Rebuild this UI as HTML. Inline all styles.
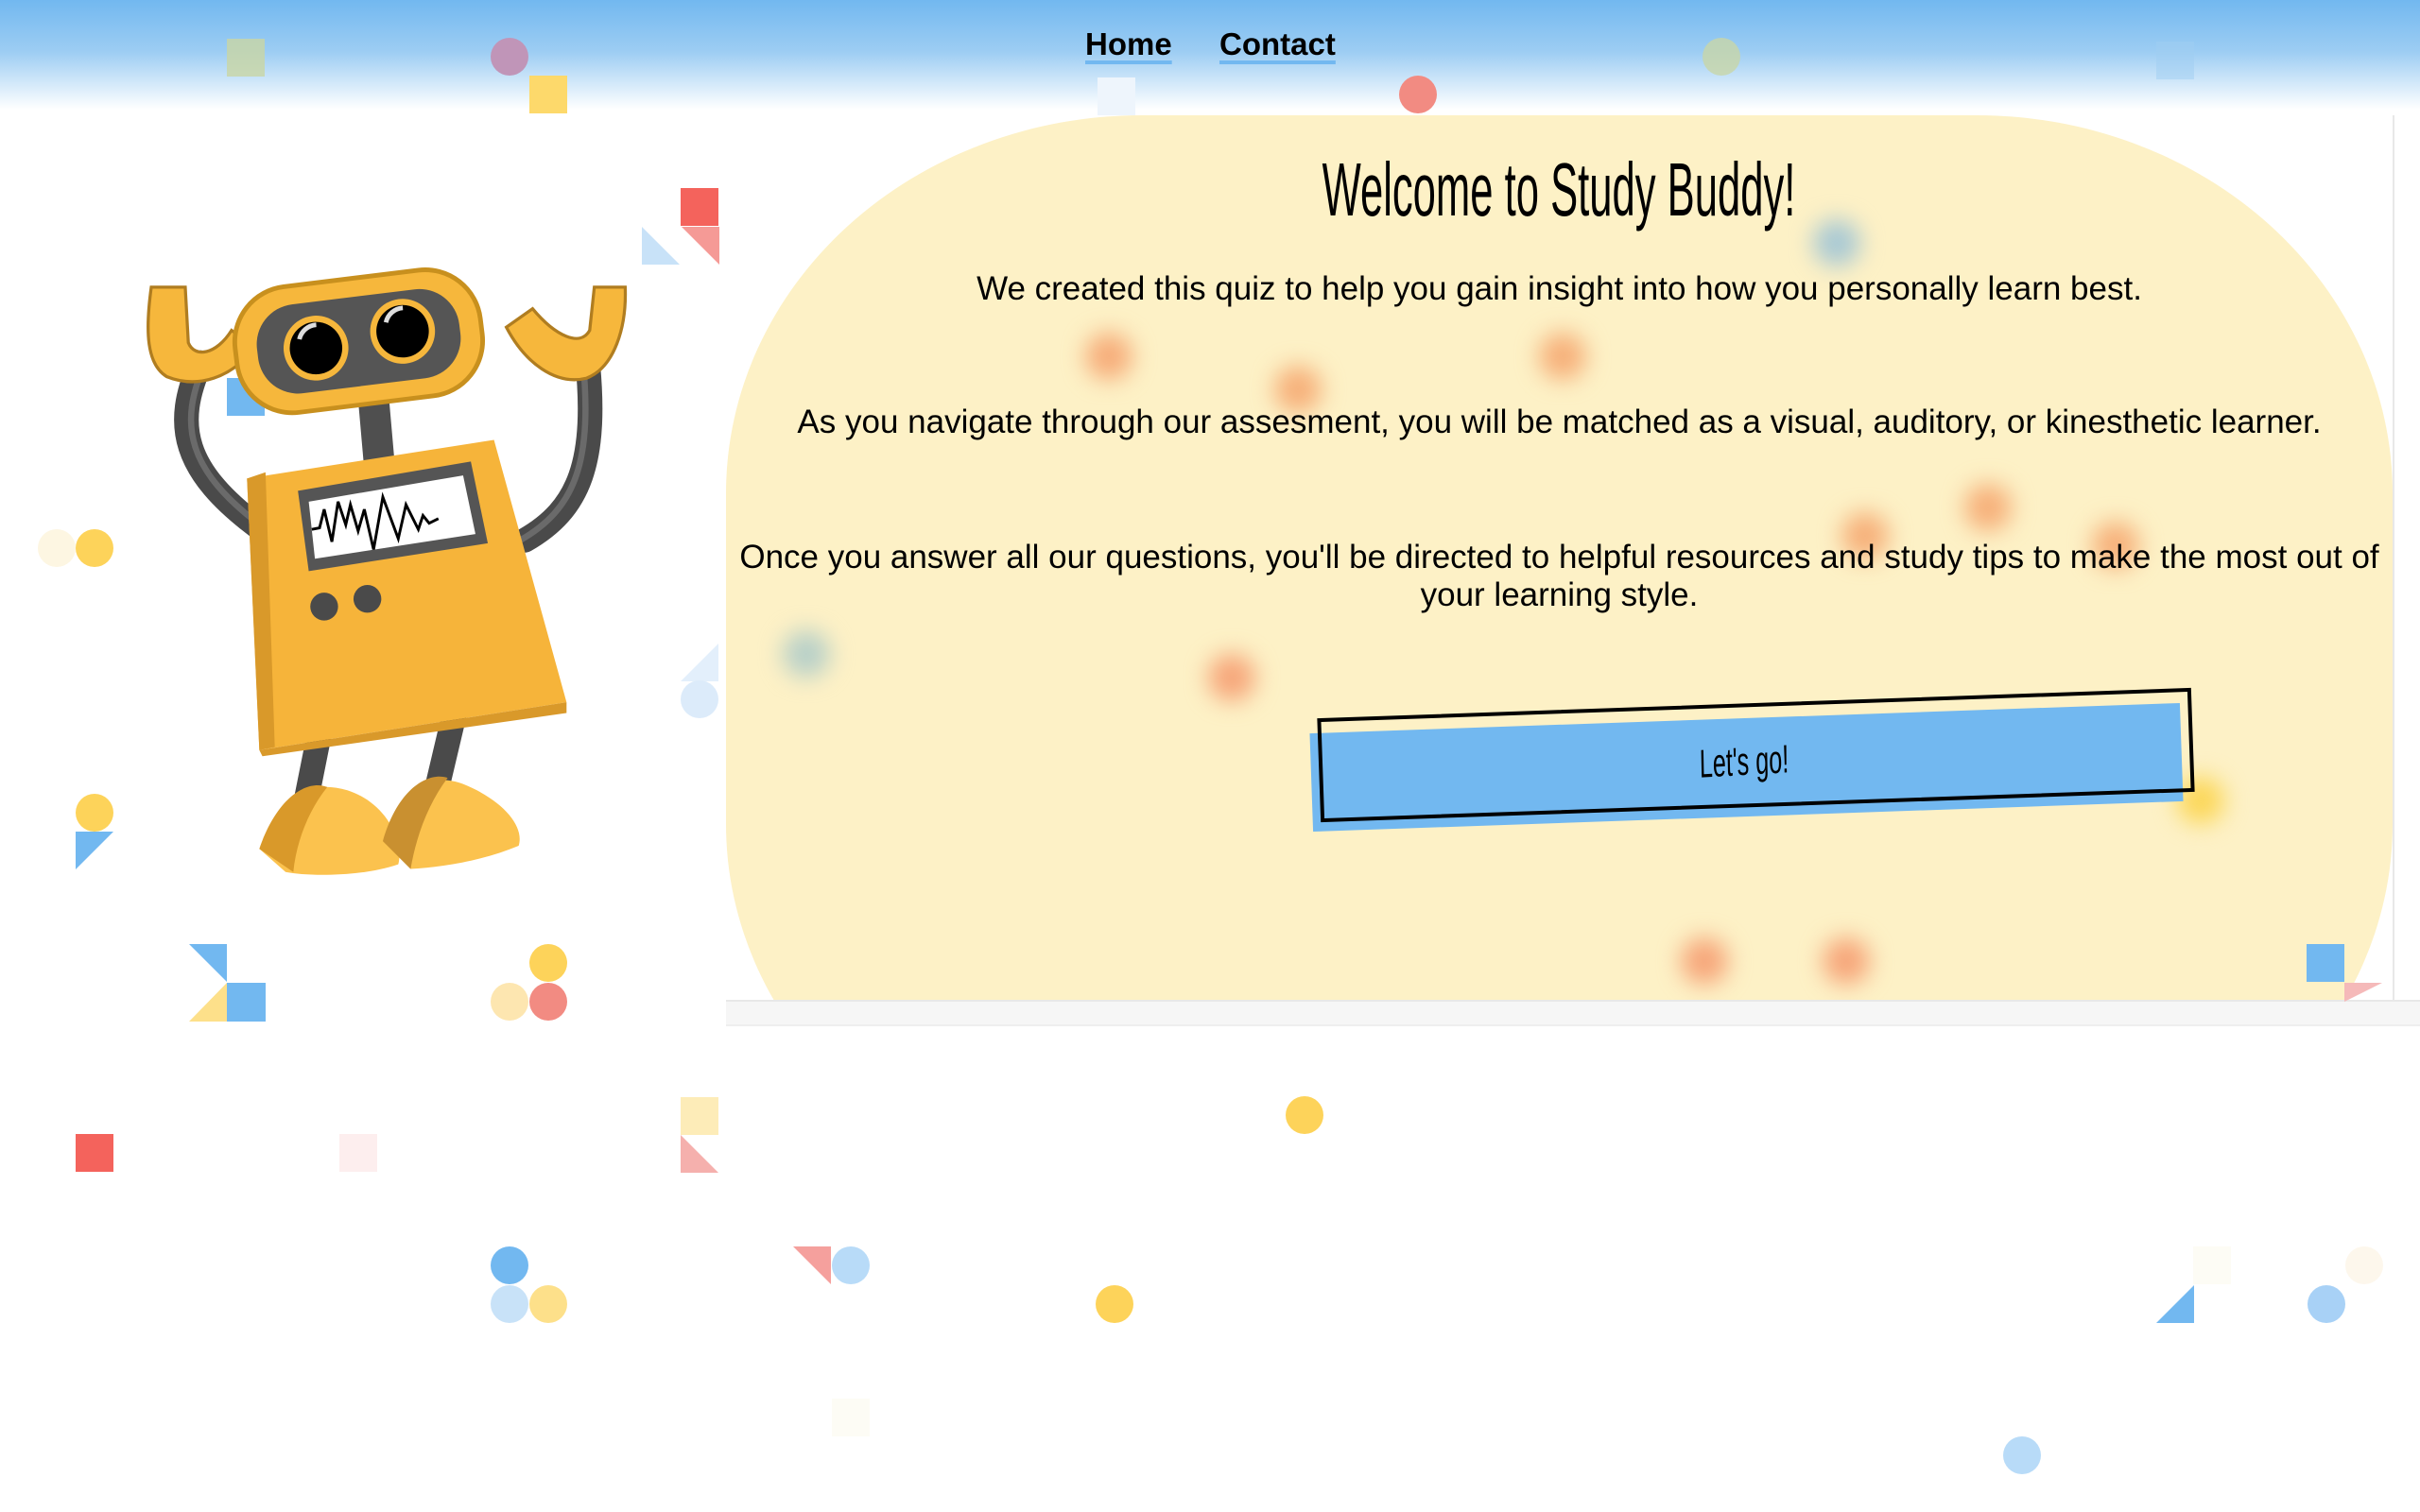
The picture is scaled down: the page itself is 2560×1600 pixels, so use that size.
<!DOCTYPE html>
<html><head><meta charset="utf-8"><style>
*{margin:0;padding:0;box-sizing:border-box}
body{width:2560px;height:1600px;position:relative;overflow:hidden;background:#fff;font-family:"Liberation Sans",sans-serif;color:#000}
.hdr{position:absolute;left:0;top:0;width:2560px;height:122px;background:linear-gradient(#72b8f0 0%,#9dcdf3 45%,#fff 95%)}
.nav{position:absolute;top:28px;font-size:33px;font-weight:bold;text-decoration:underline;text-decoration-color:#72b8f0;text-underline-offset:6px;text-decoration-thickness:4px}
.s{position:absolute;width:40px;height:40px}
.c{position:absolute;width:40px;height:40px;border-radius:50%}
.panelwrap{position:absolute;left:768px;top:122px;width:1763px;height:936px;overflow:hidden}
.panel{position:absolute;left:0;top:0;width:1763px;height:1150px;background:#fdf1c6;border-radius:440px/400px}
.blur{position:absolute;width:50px;height:50px;border-radius:50%;filter:blur(12px)}
.txt{position:absolute;left:768px;width:1763px;text-align:center;font-size:35px}
.title{position:absolute;left:1649px;top:155px;transform:translateX(-50%) scaleX(.545);transform-origin:center;font-size:80px;white-space:nowrap}
.strip{position:absolute;left:768px;top:1058px;width:1792px;height:28px;background:#f6f6f6;border-top:2px solid #e8e8e8;border-bottom:2px solid #eee}
</style></head><body>
<div class="hdr"></div>
<div class="s" style="left:240px;top:41px;background:#c9d6a4;opacity:.8"></div>
<div class="c" style="left:519px;top:40px;background:#c095b8"></div>
<div class="s" style="left:560px;top:80px;background:#fdd96b"></div>
<div class="s" style="left:1161px;top:82px;background:#eef5fc"></div>
<div class="c" style="left:1480px;top:80px;background:#f28b82"></div>
<div class="c" style="left:1801px;top:40px;background:#c8d6a8;opacity:.8"></div>
<div class="s" style="left:2281px;top:44px;background:#9fcdf2;opacity:.5"></div>

<div class="panelwrap"><div class="panel">
<div class="blur" style="left:1150px;top:110px;background:#a9c9d4"></div>
<div class="blur" style="left:380px;top:230px;background:#f6ad7a"></div>
<div class="blur" style="left:580px;top:265px;background:#f6b07a"></div>
<div class="blur" style="left:860px;top:230px;background:#f6b07a"></div>
<div class="blur" style="left:1180px;top:420px;background:#f6b07a"></div>
<div class="blur" style="left:1310px;top:390px;background:#f6b07a"></div>
<div class="blur" style="left:1445px;top:430px;background:#f6b07a"></div>
<div class="blur" style="left:510px;top:570px;background:#f6a67a"></div>
<div class="blur" style="left:60px;top:545px;background:#b8d0c8"></div>
<div class="blur" style="left:1535px;top:700px;background:#fbd75a"></div>
<div class="blur" style="left:1010px;top:870px;background:#f6a67a"></div>
<div class="blur" style="left:1160px;top:870px;background:#f6a67a"></div>
</div></div>
<div style="position:absolute;left:2531px;top:122px;width:2px;height:936px;background:#e8e8e8"></div>
<div class="strip"></div>
<div class="s" style="left:2440px;top:999px;background:#72b8f0"></div>
<svg style="position:absolute;left:2480px;top:1040px" width="40" height="20"><polygon points="0,0 40,0 0,20" fill="#f5b9b9"/></svg>

<a class="nav" style="left:1148px">Home</a>
<a class="nav" style="left:1290px">Contact</a>

<div class="title">Welcome to Study Buddy!</div>
<div class="txt" style="top:286px">We created this quiz to help you gain insight into how you personally learn best.</div>
<div class="txt" style="top:427px">As you navigate through our assesment, you will be matched as a visual, auditory, or kinesthetic learner.</div>
<div class="txt" style="top:570px;line-height:40px">Once you answer all our questions, you'll be directed to helpful resources and study tips to make the most out of<br>your learning style.</div>

<div style="position:absolute;left:1387px;top:760px;width:921px;height:104px;background:#72b8f0;transform:rotate(-2deg)"></div>
<div style="position:absolute;left:1395px;top:744px;width:925px;height:110px;border:4px solid #000;transform:rotate(-2deg)"></div>
<div style="position:absolute;left:1845px;top:782px;transform:translateX(-50%) scaleX(.6) rotate(-2deg);font-size:42px;white-space:nowrap">Let's go!</div>

<div class="s" style="left:720px;top:199px;background:#f4635c"></div>
<svg style="position:absolute;left:679px;top:240px" width="82" height="40"><polygon points="0,0 0,40 40,40" fill="#c8e2f8"/><polygon points="42,0 82,0 82,40" fill="#f59a96"/></svg>
<div class="s" style="left:240px;top:400px;background:#72b8f0"></div>
<div class="c" style="left:40px;top:560px;background:#fdf6e2"></div>
<div class="c" style="left:80px;top:560px;background:#fdd35a"></div>
<svg style="position:absolute;left:720px;top:681px" width="40" height="40"><polygon points="40,0 40,40 0,40" fill="#e3effb"/></svg>
<div class="c" style="left:720px;top:720px;background:#dcebfa"></div>
<div class="c" style="left:80px;top:840px;background:#fdd35a"></div>
<svg style="position:absolute;left:80px;top:880px" width="40" height="40"><polygon points="0,0 40,0 0,40" fill="#72b8f0"/></svg>
<svg style="position:absolute;left:200px;top:999px" width="82" height="82"><polygon points="0,0 40,0 40,40" fill="#72b8f0"/><rect x="40" y="41" width="41" height="41" fill="#72b8f0"/><polygon points="40,41 40,82 0,82" fill="#fde08a"/></svg>
<div class="c" style="left:560px;top:999px;background:#fdd35a"></div>
<div class="c" style="left:519px;top:1040px;background:#fde6b0"></div>
<div class="c" style="left:560px;top:1040px;background:#f28b82"></div>
<div class="s" style="left:720px;top:1161px;background:#fdecb8"></div>
<svg style="position:absolute;left:720px;top:1201px" width="40" height="40"><polygon points="0,0 40,40 0,40" fill="#f5b0ad"/></svg>
<div class="s" style="left:80px;top:1200px;background:#f4635c"></div>
<div class="s" style="left:359px;top:1200px;background:#fdeeee"></div>
<div class="c" style="left:1360px;top:1160px;background:#fdd35a"></div>
<svg style="position:absolute;left:839px;top:1319px" width="40" height="40"><polygon points="0,0 40,0 40,40" fill="#f5a09d"/></svg>
<div class="c" style="left:880px;top:1319px;background:#b8dbf8"></div>
<div class="c" style="left:519px;top:1319px;background:#72b8f0"></div>
<div class="c" style="left:519px;top:1360px;background:#c8e2f8"></div>
<div class="c" style="left:560px;top:1360px;background:#fde08a"></div>
<div class="c" style="left:1159px;top:1360px;background:#fdd35a"></div>
<svg style="position:absolute;left:2281px;top:1360px" width="40" height="40"><polygon points="40,0 40,40 0,40" fill="#72b8f0"/></svg>
<div class="c" style="left:2441px;top:1360px;background:#a8d1f6"></div>
<div class="c" style="left:2481px;top:1319px;background:#fdf7ec"></div>
<div class="c" style="left:2119px;top:1520px;background:#b8dbf8"></div>
<div class="s" style="left:880px;top:1480px;background:#fdfcf5"></div>
<div class="s" style="left:2320px;top:1319px;background:#fdfcf5"></div>

<svg style="position:absolute;left:0;top:0" width="700" height="1000" viewBox="0 0 428.66 612.24">
<g stroke-linecap="round" fill="none">
<path d="M130 235 C112 275 118 305 168 342" stroke="#4a4a4a" stroke-width="16"/>
<path d="M130 235 C112 275 118 305 168 342" stroke="#6a6a6a" stroke-width="4" transform="translate(3,0)"/>
<path d="M380 228 C388 300 375 330 340 350" stroke="#4a4a4a" stroke-width="16"/>
<path d="M380 228 C388 300 375 330 340 350" stroke="#6a6a6a" stroke-width="4" transform="translate(-3,0)"/>
</g>
<rect x="233" y="250" width="20" height="55" fill="#4f4f4f" transform="rotate(-5 243 270)"/>
<path d="M98 186 L120 186 L122 222 C126 232 140 230 150 214 L165 225 C150 245 128 252 108 244 C95 236 94 215 98 186 Z" fill="#f6b73c" stroke="#b07d20" stroke-width="2"/>
<path d="M405 186 L385 186 L382 214 C376 225 360 218 345 200 L328 212 C340 235 360 250 380 245 C398 238 406 212 405 186 Z" fill="#f6b73c" stroke="#b07d20" stroke-width="2"/>
<g transform="rotate(-7 233 218)">
<rect x="152" y="180" width="160" height="82" rx="36" fill="#f6b73c"/>
<rect x="152" y="180" width="160" height="82" rx="36" fill="none" stroke="#c8901e" stroke-width="3"/>
<rect x="166" y="192" width="132" height="58" rx="26" fill="#555"/>
<circle cx="204" cy="222" r="21" fill="#f6b73c"/><circle cx="204" cy="222" r="17" fill="#000"/>
<circle cx="261" cy="218" r="21" fill="#f6b73c"/><circle cx="261" cy="218" r="17" fill="#000"/>
<path d="M194 215 a12 12 0 0 1 12 -8" stroke="#ddd" stroke-width="3" fill="none"/>
<path d="M251 211 a12 12 0 0 1 12 -8" stroke="#ddd" stroke-width="3" fill="none"/>
</g>
<path d="M208 470 L198 520" stroke="#4a4a4a" stroke-width="16"/>
<path d="M295 460 L282 515" stroke="#4a4a4a" stroke-width="16"/>
<polygon points="160,310 320,285 367,455 168,486" fill="#f6b43a"/>
<polygon points="160,310 172,306 178,484 168,486" fill="#d9992a"/>
<polygon points="168,486 367,455 367,462 170,490" fill="#d9992a"/>
<polygon points="193,318 305,299 316,352 200,370" fill="#555"/>
<polygon points="200,325 300,308 308,346 204,362" fill="#fff"/>
<polyline points="202,343 207,342 210,330 215,351 219,325 224,340 227,327 232,344 236,330 242,356 248,322 258,349 263,327 271,343 274,334 278,339 284,336" fill="none" stroke="#000" stroke-width="1.8"/>
<circle cx="210" cy="393" r="9" fill="#4a4a4a"/><circle cx="238" cy="388" r="9" fill="#4a4a4a"/>
<path d="M168 550 C180 515 200 505 225 512 C250 520 262 545 258 560 C235 568 200 568 185 565 Z" fill="#fbc24e"/>
<path d="M168 550 C180 515 200 505 212 510 C200 525 192 545 190 565 Z" fill="#d9992a"/>
<path d="M248 545 C258 510 278 500 300 508 C325 518 340 535 336 548 C312 558 285 562 266 563 Z" fill="#fbc24e"/>
<path d="M248 545 C258 510 278 500 290 504 C278 520 270 540 266 563 Z" fill="#c99030"/>
</svg>
</body></html>
